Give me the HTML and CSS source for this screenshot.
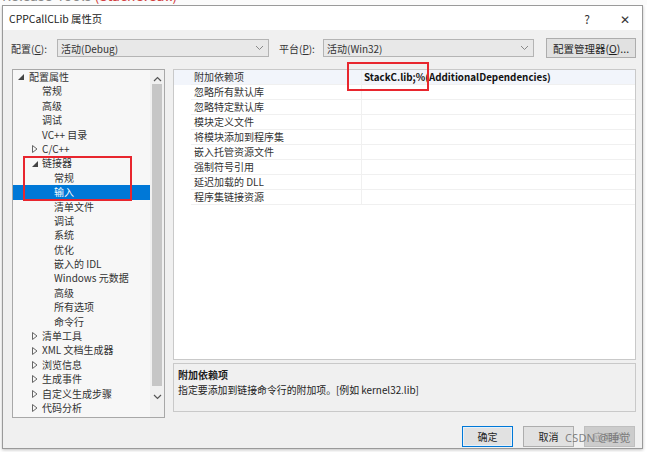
FILE: index.html
```html
<!DOCTYPE html>
<html lang="zh-CN">
<head>
<meta charset="utf-8">
<link rel="stylesheet" href="styles.css">
</head>
<body>
<div class="topstrip"><span class="toptext">Release-Tools <span class="red">(StackC.Call)</span></span></div>
<div class="dialog">
  <div class="titlebar">
    <span class="title">CPPCallCLib 属性页</span>
    <span class="tbtns"><span class="help">?</span><span class="close">✕</span></span>
  </div>
  <div class="body">
    <div class="configrow">
      <span class="lbl">配置(<u>C</u>):</span>
      <span class="combo c1"><span>活动(Debug)</span><span class="chev"><svg width="9" height="6" viewBox="0 0 9 6"><path d="M1 1l3.5 3.5L8 1" fill="none" stroke="#888" stroke-width="1"/></svg></span></span>
      <span class="lbl l2">平台(<u>P</u>):</span>
      <span class="combo c2"><span>活动(Win32)</span><span class="chev"><svg width="9" height="6" viewBox="0 0 9 6"><path d="M1 1l3.5 3.5L8 1" fill="none" stroke="#888" stroke-width="1"/></svg></span></span>
      <span class="btn mgr">配置管理器(<u>O</u>)...</span>
    </div>
    <div class="main">
      <div class="tree">
        <div class="items">
          <div class="ti lv0"><span class="exp"><svg width="6" height="6" viewBox="0 0 6 6"><path d="M6 0V6H0z" fill="#444"/></svg></span>配置属性</div>
          <div class="ti lv1">常规</div>
          <div class="ti lv1">高级</div>
          <div class="ti lv1">调试</div>
          <div class="ti lv1">VC++ 目录</div>
          <div class="ti lv1e"><span class="exp"><svg width="6" height="8" viewBox="0 0 6 8"><path d="M0.5 0.5L5 4L0.5 7.5z" fill="none" stroke="#666" stroke-width="1"/></svg></span>C/C++</div>
          <div class="ti lv1e"><span class="exp"><svg width="6" height="6" viewBox="0 0 6 6"><path d="M6 0V6H0z" fill="#444"/></svg></span>链接器</div>
          <div class="ti lv2">常规</div>
          <div class="ti lv2 sel">输入</div>
          <div class="ti lv2">清单文件</div>
          <div class="ti lv2">调试</div>
          <div class="ti lv2">系统</div>
          <div class="ti lv2">优化</div>
          <div class="ti lv2">嵌入的 IDL</div>
          <div class="ti lv2">Windows 元数据</div>
          <div class="ti lv2">高级</div>
          <div class="ti lv2">所有选项</div>
          <div class="ti lv2">命令行</div>
          <div class="ti lv1e"><span class="exp"><svg width="6" height="8" viewBox="0 0 6 8"><path d="M0.5 0.5L5 4L0.5 7.5z" fill="none" stroke="#666" stroke-width="1"/></svg></span>清单工具</div>
          <div class="ti lv1e"><span class="exp"><svg width="6" height="8" viewBox="0 0 6 8"><path d="M0.5 0.5L5 4L0.5 7.5z" fill="none" stroke="#666" stroke-width="1"/></svg></span>XML 文档生成器</div>
          <div class="ti lv1e"><span class="exp"><svg width="6" height="8" viewBox="0 0 6 8"><path d="M0.5 0.5L5 4L0.5 7.5z" fill="none" stroke="#666" stroke-width="1"/></svg></span>浏览信息</div>
          <div class="ti lv1e"><span class="exp"><svg width="6" height="8" viewBox="0 0 6 8"><path d="M0.5 0.5L5 4L0.5 7.5z" fill="none" stroke="#666" stroke-width="1"/></svg></span>生成事件</div>
          <div class="ti lv1e"><span class="exp"><svg width="6" height="8" viewBox="0 0 6 8"><path d="M0.5 0.5L5 4L0.5 7.5z" fill="none" stroke="#666" stroke-width="1"/></svg></span>自定义生成步骤</div>
          <div class="ti lv1e"><span class="exp"><svg width="6" height="8" viewBox="0 0 6 8"><path d="M0.5 0.5L5 4L0.5 7.5z" fill="none" stroke="#666" stroke-width="1"/></svg></span>代码分析</div>
        </div>
        <div class="scroll">
          <span class="sarrow"><svg width="9" height="6" viewBox="0 0 9 6"><path d="M1 5l3.5-3.5L8 5" fill="none" stroke="#555" stroke-width="1.2"/></svg></span>
          <span class="thumb"></span>
          <span class="sarrow"><svg width="9" height="6" viewBox="0 0 9 6"><path d="M1 1l3.5 3.5L8 1" fill="none" stroke="#555" stroke-width="1.2"/></svg></span>
        </div>
      </div>
      <div class="right">
        <div class="grid">
          <div class="row first"><span class="gut"></span><span class="name">附加依赖项</span><span class="val">StackC.lib;%(AdditionalDependencies)</span></div>
          <div class="row"><span class="gut"></span><span class="name">忽略所有默认库</span><span class="val"></span></div>
          <div class="row"><span class="gut"></span><span class="name">忽略特定默认库</span><span class="val"></span></div>
          <div class="row"><span class="gut"></span><span class="name">模块定义文件</span><span class="val"></span></div>
          <div class="row"><span class="gut"></span><span class="name">将模块添加到程序集</span><span class="val"></span></div>
          <div class="row"><span class="gut"></span><span class="name">嵌入托管资源文件</span><span class="val"></span></div>
          <div class="row"><span class="gut"></span><span class="name">强制符号引用</span><span class="val"></span></div>
          <div class="row"><span class="gut"></span><span class="name">延迟加载的 DLL</span><span class="val"></span></div>
          <div class="row"><span class="gut"></span><span class="name">程序集链接资源</span><span class="val"></span></div>
        </div>
        <div class="desc">
          <div class="dtitle">附加依赖项</div>
          <div class="dtext">指定要添加到链接命令行的附加项。[例如 kernel32.lib]</div>
        </div>
      </div>
    </div>
    <div class="btnrow">
      <span class="btn ok">确定</span>
      <span class="btn">取消</span>
      <span class="btn dis">应用(A)</span>
    </div>
  </div>
</div>
<div class="mark m1"></div>
<div class="mark m2"></div>
<div class="wm">CSDN @睡觉</div>
</body>
</html>
```
FILE: styles.css
```css
* { box-sizing: border-box; }
html, body { margin: 0; padding: 0; }
body {
  width: 647px; height: 452px; overflow: hidden; position: relative;
  background: #ffffff;
  font-family: "Noto Sans CJK SC", "Noto Sans", sans-serif;
  font-size: 10px; color: #1e1e1e;
}
.topstrip { height: 5px; overflow: hidden; position: relative; background: #fbfbfb; }
.toptext { position: absolute; left: 2px; top: -12px; font-size: 14px; color: #8a8a8a; line-height: 14px; white-space: nowrap; }
.red { color: #d24040; }
.dialog {
  margin-left: 2px; width: 641px; height: 444px;
  border: 1px solid #9a9a9a; background: #f0f0f0;
  box-shadow: 0 1px 3px rgba(0,0,0,0.25);
  display: flex; flex-direction: column;
}
.titlebar {
  height: 24px; background: #ffffff; display: flex; align-items: center;
  justify-content: space-between; padding-left: 6px; flex: none;
}
.title { font-size: 10.4px; color: #222; }
.tbtns { display: flex; align-items: center; }
.help { font-size: 12px; color: #333; margin-right: 30px; }
.close { font-size: 12px; color: #333; margin-right: 12px; }
.body { flex: 1; display: flex; flex-direction: column; padding: 8px 6px 0 8px; }
.configrow { display: flex; align-items: center; height: 20px; }
.lbl { width: 46px; white-space: nowrap; color: #333; }
.lbl u, .btn u { text-decoration: underline; }
.l2 { width: 44px; margin-left: 10px; }
.combo {
  height: 18px; border: 1px solid #b4b4b4; background: #e8e8e8;
  display: flex; align-items: center; justify-content: space-between;
  padding: 0 4px 0 3px; color: #333;
}
.c1 { width: 212px; }
.c2 { width: 211px; }
.chev { display: flex; }
.btn {
  height: 21px; border: 1px solid #adadad; background: #e1e1e1;
  display: flex; align-items: center; justify-content: center; color: #1e1e1e;
}
.mgr { width: 90px; margin-left: 12px; height: 20px; font-size: 10.5px; }
.main { display: flex; margin-top: 11px; height: 349px; }
.tree {
  width: 153px; height: 349px; border: 1px solid #a8a8a8; background: #f7f7f7;
  display: flex; margin-left: 1px; overflow: hidden;
}
.items { flex: 1; overflow: hidden; }
.ti { height: 14.4px; line-height: 14.4px; white-space: nowrap; display: flex; align-items: center; color: #333; }
.exp { display: inline-flex; width: 10px; align-items: center; }
.lv0 { padding-left: 5px; }
.lv0 .exp { width: 11px; }
.lv1 { padding-left: 29px; }
.lv1e { padding-left: 19px; }
.lv2 { padding-left: 41px; }
.sel { background: #0078d7; color: #fff; }
.scroll {
  width: 14px; background: #f0f0f0; display: flex; flex-direction: column;
  align-items: center; padding-top: 4px;
}
.sarrow { height: 10px; display: flex; align-items: center; }
.thumb { width: 10px; height: 302px; background: #c6c6c6; margin: 0 0 6px; }
.right { flex: 1; margin-left: 8px; display: flex; flex-direction: column; }
.grid {
  height: 291px; background: #fff; border: 1px solid #c9c9c9;
}
.row { display: flex; height: 15px; line-height: 14px; }
.gut { width: 17px; flex: none; }
.name { width: 170px; flex: none; padding-left: 3px; border-bottom: 1px solid #f0f0f0; color: #333; }
.val { flex: 1; border-bottom: 1px solid #f0f0f0; border-left: 1px solid #f0f0f0; padding-left: 2px; font-weight: bold; color: #111; font-size: 9.8px; }
.first { background: #f2f5fb; }
.desc {
  margin-top: 3px; height: 49px; border: 1px solid #c9c9c9; background: #f0f0f0;
  padding: 3px 0 0 4px;
}
.dtitle { font-weight: bold; line-height: 15px; }
.dtext { line-height: 16px; color: #222; font-size: 9.9px; }
.btnrow { display: flex; justify-content: flex-end; gap: 10px; margin-top: 8px; padding-right: 1px; }
.btnrow .btn { width: 51px; }
.ok { border-color: #0078d7; box-shadow: inset 0 0 0 1px #e5f1fb; }
.dis { background: #cccccc; border-color: #bfbfbf; color: #a0a0a0; }
.mark { position: absolute; border: 2px solid #e8262e; }
.m1 { left: 347px; top: 62px; width: 82px; height: 29px; }
.m2 { left: 23px; top: 156px; width: 109px; height: 45px; }
.wm { position: absolute; left: 565px; top: 429px; font-size: 11px; color: rgba(110,110,110,0.85); font-family: "Noto Sans", "Noto Sans CJK SC", sans-serif; letter-spacing: 0.2px; }
```
